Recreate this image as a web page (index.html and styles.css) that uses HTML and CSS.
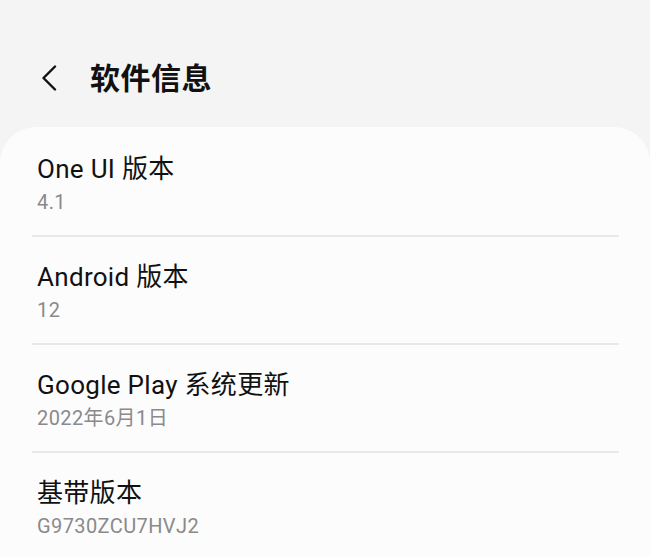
FILE: index.html
```html
<!DOCTYPE html>
<html lang="zh-CN">
<head>
<meta charset="utf-8">
<title>软件信息</title>
<link rel="stylesheet" href="styles.css">
</head>
<body>
<div class="screen">
  <header class="header">
    <svg class="back" width="18" height="26" viewBox="0 0 18 26" aria-hidden="true">
      <path d="M15 1.5 L3.5 13 L15 24.5" fill="none" stroke="#111" stroke-width="2.4" stroke-linecap="round" stroke-linejoin="round"/>
    </svg>
    <h1 class="title">软件信息</h1>
  </header>
  <main class="card">
    <div class="row">
      <div class="row-title">One UI 版本</div>
      <div class="row-sub">4.1</div>
    </div>
    <div class="row">
      <div class="row-title">Android 版本</div>
      <div class="row-sub">12</div>
    </div>
    <div class="row">
      <div class="row-title">Google Play 系统更新</div>
      <div class="row-sub">2022年6月1日</div>
    </div>
    <div class="row">
      <div class="row-title">基带版本</div>
      <div class="row-sub">G9730ZCU7HVJ2</div>
    </div>
  </main>
</div>
</body>
</html>
```
FILE: styles.css
```css
* { box-sizing: border-box; }
html, body {
  margin: 0;
  padding: 0;
  background: #f4f4f4;
  font-family: Roboto, "Noto Sans CJK SC", sans-serif;
  color: #111;
}
.screen {
  width: 650px;
  height: 557px;
  overflow: hidden;
  display: flex;
  flex-direction: column;
}
.header {
  flex: none;
  height: 127px;
  padding: 24px 0 0 40px;
  display: flex;
  align-items: center;
  gap: 32px;
}
.back { display: block; flex: none; margin-top: 5px; }
.title {
  margin: 0;
  font-family: "Noto Sans CJK SC", sans-serif;
  font-weight: 700;
  font-size: 30px;
  line-height: 40px;
  color: #111;
  letter-spacing: 0.5px;
}
.card {
  flex: 1 0 auto;
  background: #fcfcfc;
  border-radius: 36px 36px 0 0;
  padding: 0 31px 0 32px;
}
.row {
  border-top: 2px solid #e8e8e8;
  padding: 23px 0 20px 5px;
}
.row:first-child { border-top-color: transparent; }
.row-title {
  font-size: 26px;
  line-height: 34px;
  color: #111;
  letter-spacing: 0.3px;
}
.row-sub {
  margin-top: 3px;
  font-size: 20px;
  line-height: 26px;
  color: #8a8a8a;
  letter-spacing: 0.4px;
}
```
